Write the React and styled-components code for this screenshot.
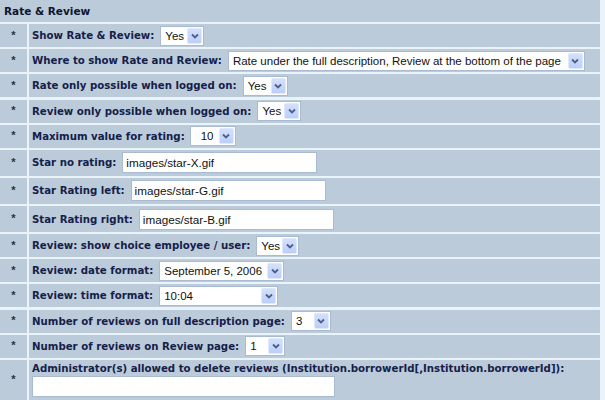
import React from 'react';
import styled, { createGlobalStyle } from 'styled-components';

const GlobalStyle = createGlobalStyle`
  html, body {
    margin: 0;
    padding: 0;
    background: #eaf2fa;
  }
`;

const Table = styled.div`
  width: 605px;
  height: 400px;
  box-sizing: border-box;
  padding-right: 5px;
  display: grid;
  grid-template-columns: 27px 1fr;
  grid-auto-rows: auto;
  column-gap: 2px;
  row-gap: 2px;
  background: #eaf2fa;
  font-family: "Liberation Sans", Arial, sans-serif;
  overflow: hidden;
`;

const Header = styled.div`
  grid-column: 1 / span 2;
  height: 22px;
  display: flex;
  align-items: center;
  padding-left: 4px;
  background: #bccbd9;
  font-family: "DejaVu Sans", Verdana, sans-serif;
  font-size: 10.5px;
  font-weight: bold;
  color: #0d1530;
`;

const StarCell = styled.div`
  height: ${p => p.$h}px;
  background: #bccbd9;
  display: flex;
  align-items: center;
  justify-content: center;
  font-size: 11px;
  font-weight: bold;
  color: #2a3040;
  padding-bottom: 2px;
  box-sizing: border-box;
`;

const FieldCell = styled.div`
  height: ${p => p.$h}px;
  background: #bccbd9;
  display: flex;
  flex-direction: ${p => (p.$stack ? 'column' : 'row')};
  align-items: ${p => (p.$stack ? 'flex-start' : 'center')};
  justify-content: ${p => (p.$stack ? 'center' : 'flex-start')};
  gap: ${p => (p.$stack ? '2px' : '0')};
  padding-left: 3px;
  box-sizing: border-box;
`;

const Label = styled.span`
  font-family: "DejaVu Sans", Verdana, sans-serif;
  font-size: 10.2px;
  font-weight: bold;
  color: #14204a;
  white-space: nowrap;
  margin-right: ${p => p.$gap ?? 6}px;
`;

const SelectBox = styled.div`
  width: ${p => p.$w}px;
  height: 20px;
  box-sizing: border-box;
  background: #fff;
  border: 1px solid #a9bbd1;
  display: flex;
  align-items: center;
  justify-content: space-between;
  padding: 1px 1px 1px ${p => p.$pl ?? 4}px;
  font-size: 11.5px;
  color: #111;
  white-space: nowrap;
`;

const ArrowButton = styled.span`
  width: 15px;
  height: 16px;
  box-sizing: border-box;
  background: linear-gradient(#d3e0fc, #bccffa);
  border: 1px solid #dfe8fd;
  border-radius: 2px;
  display: flex;
  align-items: center;
  justify-content: center;
  flex-shrink: 0;
`;

const TextInput = styled.div`
  width: ${p => p.$w}px;
  height: 21px;
  box-sizing: border-box;
  background: #fff;
  border: 1px solid #a9bbd1;
  display: flex;
  align-items: center;
  padding-left: 3px;
  font-size: 11.7px;
  color: #111;
`;

const Chevron = () => (
  <svg width="8" height="6" viewBox="0 0 8 6">
    <path d="M1 1.5 L4 4.5 L7 1.5" fill="none" stroke="#4d5f86" strokeWidth="1.8" />
  </svg>
);

const Select = ({ value, width, pl }) => (
  <SelectBox $w={width} $pl={pl}>
    <span>{value}</span>
    <ArrowButton>
      <Chevron />
    </ArrowButton>
  </SelectBox>
);

const rows = [
  { label: 'Show Rate & Review:', type: 'select', value: 'Yes', width: 44 },
  { label: 'Where to show Rate and Review:', type: 'select', value: 'Rate under the full description, Review at the bottom of the page', width: 357 },
  { label: 'Rate only possible when logged on:', type: 'select', value: 'Yes', width: 45 },
  { label: 'Review only possible when logged on:', type: 'select', value: 'Yes', width: 44 },
  { label: 'Maximum value for rating:', type: 'select', value: '10', width: 46, pl: 10, gap: 5 },
  { label: 'Star no rating:', type: 'input', value: 'images/star-X.gif', width: 195 },
  { label: 'Star Rating left:', type: 'input', value: 'images/star-G.gif', width: 195 },
  { label: 'Star Rating right:', type: 'input', value: 'images/star-B.gif', width: 195 },
  { label: 'Review: show choice employee / user:', type: 'select', value: 'Yes', width: 43 },
  { label: 'Review: date format:', type: 'select', value: 'September 5, 2006', width: 125 },
  { label: 'Review: time format:', type: 'select', value: '10:04', width: 119 },
  { label: 'Number of reviews on full description page:', type: 'select', value: '3', width: 40 },
  { label: 'Number of reviews on Review page:', type: 'select', value: '1', width: 40 },
];

export default function App() {
  return (
    <>
      <GlobalStyle />
      <Table>
        <Header>Rate &amp; Review</Header>
        {rows.map((r, i) => {
          const h = r.type === 'input' ? 26 : 23;
          return (
            <React.Fragment key={i}>
              <StarCell $h={h}>*</StarCell>
              <FieldCell $h={h}>
                <Label $gap={r.gap}>{r.label}</Label>
                {r.type === 'select' ? (
                  <Select value={r.value} width={r.width} pl={r.pl} />
                ) : (
                  <TextInput $w={r.width}>{r.value}</TextInput>
                )}
              </FieldCell>
            </React.Fragment>
          );
        })}
        <StarCell $h={40}>*</StarCell>
        <FieldCell $h={40} $stack>
          <Label $gap={0}>
            Administrator(s) allowed to delete reviews (Institution.borrowerId[,Institution.borrowerId]):
          </Label>
          <TextInput $w={303} />
        </FieldCell>
      </Table>
    </>
  );
}
